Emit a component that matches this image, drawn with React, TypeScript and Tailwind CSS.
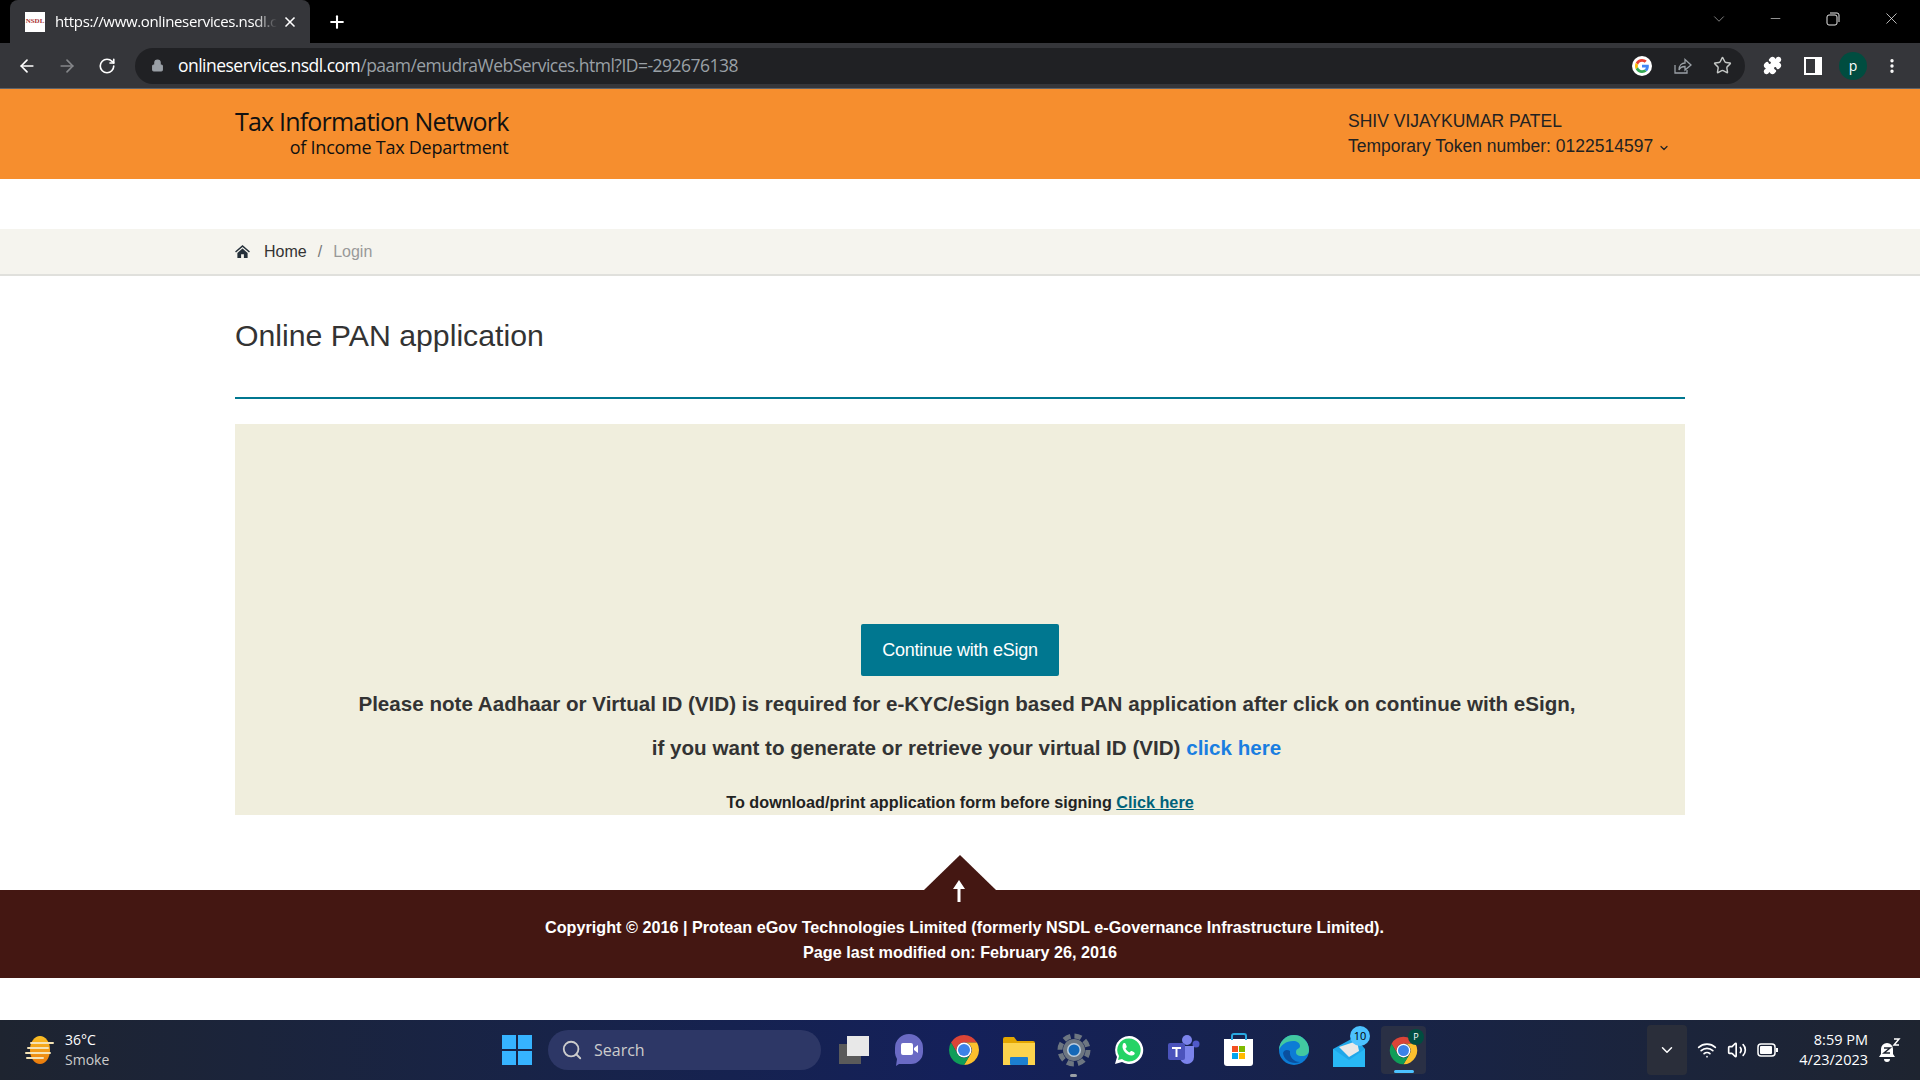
import { ArrowLeft, ArrowRight, ChevronDown, Lock, MoreVertical, Plus, RotateCw, Search, Star, Volume2, Wifi, X, Puzzle, Minus } from "lucide-react";

function ChromeLogo({ size = 40 }: { size?: number }) {
  return (
    <svg width={size} height={size} viewBox="0 0 48 48">
      <path d="M6.68 14A20 20 0 0 1 41.32 14L24 14A10 10 0 0 0 15.34 29Z" fill="#db4437" />
      <path d="M41.32 14A20 20 0 0 1 24 44L33 29A10 10 0 0 0 24 14Z" fill="#fbc02d" />
      <path d="M24 44A20 20 0 0 1 6.68 14L15.34 29A10 10 0 0 0 33 29Z" fill="#0f9d58" />
      <circle cx="24" cy="24" r="10" fill="#fff" />
      <circle cx="24" cy="24" r="8" fill="#3b82e8" />
    </svg>
  );
}

function TabStrip() {
  return (
    <div className="flex h-[43px] items-end bg-black pl-[10px] text-white">
      <div className="flex h-[43px] w-[300px] items-center rounded-t-lg bg-[#35363a] pl-[15px] pr-[12px]">
        <div className="flex h-[20px] w-[20px] shrink-0 items-center justify-center bg-white font-['Liberation_Serif',serif] text-[7px] font-bold text-[#a33]">
          NSDL
        </div>
        <span className="mb-[1px] ml-[10px] whitespace-nowrap font-['Open_Sans',sans-serif] text-[15px] tracking-[-0.35px] [mask-image:linear-gradient(to_right,black_90%,transparent)]">
          https://www.onlineservices.nsdl.c
        </span>
        <X size={16} strokeWidth={2.5} className="ml-auto shrink-0" />
      </div>
      <Plus size={20} strokeWidth={2.5} className="mb-[11px] ml-[17px]" />
      <div className="mb-[15px] ml-auto flex items-center text-[#e8e8e8]">
        <ChevronDown size={18} strokeWidth={1} className="mr-[40px] text-[#aaa]" />
        <Minus size={15} strokeWidth={1} className="mr-[43px]" />
        <svg width="14" height="14" viewBox="0 0 14 14" fill="none" stroke="currentColor" className="mr-[42px]">
          <rect x="1" y="3" width="10" height="10" rx="2" />
          <path d="M4 1h7a2 2 0 0 1 2 2v7" />
        </svg>
        <X size={19} strokeWidth={1} className="mr-[19px]" />
      </div>
    </div>
  );
}

function Toolbar() {
  return (
    <div className="flex h-[46px] items-center border-b border-[#5f6368] bg-[#35363a] text-white">
      <ArrowLeft size={20} strokeWidth={2} className="ml-[17px]" />
      <ArrowRight size={20} strokeWidth={2} className="ml-[20px] text-[#85878a]" />
      <RotateCw size={18} strokeWidth={2.2} className="ml-[21px]" />
      <div className="ml-[19px] flex h-[36px] w-[1610px] items-center rounded-full bg-[#202124] pl-[16px]">
        <Lock size={13} fill="#9aa0a6" className="text-[#9aa0a6]" />
        <span className="ml-[14px] font-['Open_Sans',sans-serif] text-[17.5px] tracking-[-0.52px]">
          onlineservices.nsdl.com<span className="text-[#9aa0a6]">/paam/emudraWebServices.html?ID=-292676138</span>
        </span>
        <div className="ml-auto flex items-center">
          <div className="flex h-[20px] w-[20px] items-center justify-center rounded-full bg-white">
            <svg width="14" height="14" viewBox="0 0 48 48">
              <path fill="#ea4335" d="M24 9.5c3.5 0 6.700 1.300 9.200 3.500l6.900-6.900C35.900 2.400 30.300 0 24 0 14.600 0 6.500 5.400 2.600 13.200l8 6.200C12.500 13.600 17.800 9.500 24 9.500z" />
              <path fill="#4285f4" d="M47.500 24.500c0-1.600-.1-3.100-.4-4.500H24v9h13.200c-.6 3-2.300 5.500-4.800 7.200l7.700 6c4.500-4.200 7.400-10.300 7.400-17.700z" />
              <path fill="#fbbc05" d="M10.500 28.600c-.5-1.400-.8-3-.8-4.600s.3-3.200.8-4.600l-8-6.200C.9 16.500 0 20.100 0 24s.9 7.500 2.600 10.800l7.900-6.200z" />
              <path fill="#34a853" d="M24 48c6.500 0 11.900-2.100 15.900-5.800l-7.700-6c-2.200 1.400-4.900 2.300-8.200 2.300-6.200 0-11.500-4.200-13.400-9.800l-8 6.200C6.500 42.600 14.600 48 24 48z" />
            </svg>
          </div>
          <svg width="20" height="20" viewBox="0 0 20 20" fill="none" stroke="#9aa0a6" strokeWidth="1.300" className="ml-[20px]">
            <path d="M3 9v8h12v-3M7 14c0-5 3-7 6-7V3.500l6 5.500-6 5v-3.500c-3 0-5 1-6 3.500z" />
          </svg>
          <Star size={19} strokeWidth={1.8} className="ml-[21px] mr-[13px] text-[#c4c7c5]" />
        </div>
      </div>
      <Puzzle size={19} fill="#fff" className="ml-[18px]" />
      <div className="ml-[22px] flex h-[18px] w-[18px] justify-start border-[2.5px] border-white bg-white">
        <div className="h-full w-[9px] bg-[#35363a]" />
      </div>
      <div className="ml-[17px] flex h-[28px] w-[28px] items-center justify-center rounded-full bg-[#004d40] font-['Open_Sans',sans-serif] text-[14px] text-white">
        p
      </div>
      <MoreVertical size={18} strokeWidth={2.5} className="ml-[16px]" />
    </div>
  );
}

function SiteHeader() {
  return (
    <div className="flex h-[90px] items-center justify-between bg-[#f68e2e] px-[235px]">
      <div className="mb-[4px] flex flex-col items-end font-['Open_Sans',sans-serif] leading-none text-[#111]">
        <div className="text-[25px] tracking-[-0.8px]">Tax Information Network</div>
        <div className="mt-[4px] text-[18px] tracking-[-0.25px]">of Income Tax Department</div>
      </div>
      <div className="w-[337px] font-['Liberation_Sans',sans-serif] text-[17.5px] leading-[25px] text-[#222]">
        <div>SHIV VIJAYKUMAR PATEL</div>
        <div className="flex items-center">
          Temporary Token number: 0122514597
          <ChevronDown size={12} strokeWidth={2.5} className="ml-[5px] mt-[3px]" />
        </div>
      </div>
    </div>
  );
}

function Breadcrumb() {
  return (
    <div className="mt-[50px] flex h-[47px] items-center border-b-2 border-[#e0e0dc] bg-[#f5f4ee] px-[235px] font-['Liberation_Sans',sans-serif] text-[16px]">
      <svg width="15" height="13" viewBox="0 0 16 14" fill="#25303a">
        <path d="M8 0 0 7l1 1.200L8 2.200l7 6L16 7zM2.500 8.500V14H6.500V10h3v4h4V8.500L8 3.700z" />
      </svg>
      <span className="ml-[14px] text-[#333]">Home</span>
      <span className="ml-[11px] text-[#777]">/</span>
      <span className="ml-[11px] text-[#999]">Login</span>
    </div>
  );
}

function MainContent() {
  return (
    <div className="px-[235px] font-['Liberation_Sans',sans-serif] text-[#333]">
      <h1 className="mt-[42px] text-[30.25px] leading-[36px]">Online PAN application</h1>
      <div className="mt-[43px] h-[2px] bg-[#007790]" />
      <div className="mt-[25px] flex h-[391px] flex-col items-center bg-[#f0eedd] pt-[200px]">
        <button className="h-[52px] w-[198px] rounded-[2px] bg-[#007790] text-[18px] tracking-[-0.25px] text-white">
          Continue with eSign
        </button>
        <p className="mt-[14px] pl-[14px] text-[20.6px] font-bold leading-[28px]">
          Please note Aadhaar or Virtual ID (VID) is required for e-KYC/eSign based PAN application after click on continue with eSign,
        </p>
        <p className="mt-[16px] pl-[13px] text-[20.6px] font-bold leading-[28px]">
          if you want to generate or retrieve your virtual ID (VID) <a className="text-[#1a7ee0]">click here</a>
        </p>
        <p className="mt-[29px] text-[16.2px] font-bold leading-[22px] text-[#222]">
          To download/print application form before signing <a className="text-[#00627a] underline">Click here</a>
        </p>
      </div>
    </div>
  );
}

function Footer() {
  return (
    <div className="relative mt-[75px] h-[88px] bg-[#441712] pt-[25px] text-center font-['Liberation_Sans',sans-serif] text-[16.2px] font-bold leading-[25px] text-white">
      {/* back to top notch */}
      <div className="absolute bottom-full left-1/2 h-0 w-0 -translate-x-1/2 border-x-[36px] border-b-[35px] border-x-transparent border-b-[#441712]" />
      <svg width="14" height="22" viewBox="0 0 14 22" className="absolute left-1/2 top-[-10px] ml-[-8px]">
        <path d="M7 0 13 9H8.500V22H5.500V9H1Z" fill="#fff" />
      </svg>
      <div className="pl-[9px]">Copyright © 2016 | Protean eGov Technologies Limited (formerly NSDL e-Governance Infrastructure Limited).</div>
      <div>Page last modified on: February 26, 2016</div>
    </div>
  );
}

function TaskIcon({ children, active }: { children: React.ReactNode; active?: boolean }) {
  return (
    <div className={`relative flex h-[48px] w-[45px] items-center justify-center rounded ${active ? "bg-[#2a3045]" : ""}`}>
      {children}
      {active && <div className="absolute bottom-[1px] h-[3px] w-[20px] rounded-full bg-[#4cc2ff]" />}
    </div>
  );
}

function Taskbar() {
  return (
    <div className="mt-auto grid h-[60px] grid-cols-[1fr_auto_1fr] items-center bg-gradient-to-r from-[#1e2430] via-[#14205a] to-[#1e2430] font-['Open_Sans',sans-serif] text-white">
      <div className="flex items-center pl-[25px]">
        <svg width="30" height="30" viewBox="0 0 30 30">
          <defs>
            <linearGradient id="sun" x1="0" y1="0" x2="0" y2="1">
              <stop offset="0" stopColor="#fbbf24" />
              <stop offset="1" stopColor="#ea7a0c" />
            </linearGradient>
          </defs>
          <ellipse cx="15" cy="15" rx="10" ry="14" fill="url(#sun)" />
          <path d="M6 8h22M3 13h20M1 18h24M2 23h16" stroke="#f5e3b5" strokeWidth="2" strokeLinecap="round" />
        </svg>
        <div className="ml-[10px] text-[14px] leading-[20px]">
          <div>36°C</div>
          <div className="text-[#ccc]">Smoke</div>
        </div>
      </div>
      <div className="flex items-center gap-[10px] pl-[8px]">
        <svg width="30" height="30" viewBox="0 0 30 30" className="mr-[2px]">
          <path d="M0 0H14V14H0ZM16 0H30V14H16ZM0 16H14V30H0ZM16 16H30V30H16Z" fill="#36b3ff" />
        </svg>
        <div className="ml-[4px] flex h-[40px] w-[273px] items-center rounded-full bg-[#2d3766] pl-[13px] text-[16px] text-[#ccc]">
          <Search size={22} />
          <span className="ml-[11px]">Search</span>
        </div>
        <TaskIcon>
          <div className="relative h-[28px] w-[30px]">
            <div className="absolute bottom-0 left-0 h-[20px] w-[22px] bg-[#5a5a5a]" />
            <div className="absolute right-0 top-0 h-[20px] w-[22px] bg-[#e8e8e8]" />
          </div>
        </TaskIcon>
        <TaskIcon>
          <svg width="30" height="34" viewBox="0 0 30 34">
            <path d="M15 1a14 14 0 0 1 14 14v4a12 12 0 0 1-12 12H5l-3 2 1-7a14 14 0 0 1-2-6v-5A14 14 0 0 1 15 1z" fill="#6a6ac4" />
            <path d="M7 12a2 2 0 0 1 2-2h8a2 2 0 0 1 2 2v8a2 2 0 0 1-2 2H9a2 2 0 0 1-2-2zM20 15l4-3v8l-4-3z" fill="#fff" />
          </svg>
        </TaskIcon>
        <TaskIcon>
          <ChromeLogo size={36} />
        </TaskIcon>
        <TaskIcon>
          <svg width="32" height="30" viewBox="0 0 32 30">
            <path d="M0 4a2 2 0 0 1 2-2h9l3 4h16a2 2 0 0 1 2 2v22H0z" fill="#e3a600" />
            <path d="M0 8h32v22H0z" fill="#fcd34d" />
            <rect x="7" y="22" width="18" height="8" rx="1" fill="#1c7fd0" />
          </svg>
        </TaskIcon>
        <TaskIcon>
          <svg width="34" height="34" viewBox="0 0 34 34">
            <circle cx="17" cy="17" r="14" fill="none" stroke="#6d7681" strokeWidth="5" strokeDasharray="7 4" />
            <circle cx="17" cy="17" r="11" fill="#6d7681" />
            <circle cx="17" cy="17" r="7" fill="#bcd" />
            <circle cx="17" cy="17" r="5.500" fill="#1468b8" />
          </svg>
          <div className="absolute bottom-[-3px] h-[3px] w-[7px] rounded-full bg-[#9aa0a6]" />
        </TaskIcon>
        <TaskIcon>
          <svg width="32" height="32" viewBox="0 0 32 32">
            <path d="M16 2a14 14 0 0 0-12 21L2 30l7-2A14 14 0 1 0 16 2z" fill="#fff" />
            <path d="M16 4.500A11.500 11.500 0 0 0 6 22l-1 4 4-1a11.500 11.500 0 1 0 7-20.500z" fill="#25d366" />
            <path d="M11 9c1 0 1.500 0 2 1.500s1 2 .5 3l-1 1c.8 1.700 2.300 3.200 4 4l1.200-1.200c.6-.5 1-.4 3 .7s1 3-1.700 3.500C14 22 9 16 9.500 12c.2-2 .8-3 1.500-3z" fill="#fff" />
          </svg>
        </TaskIcon>
        <TaskIcon>
          <svg width="32" height="30" viewBox="0 0 32 30">
            <circle cx="19" cy="5" r="5" fill="#7b83eb" />
            <circle cx="28" cy="9" r="3.500" fill="#5059c9" />
            <path d="M12 11h14v11a7 7 0 0 1-14 0z" fill="#7b83eb" />
            <rect x="0" y="8" width="17" height="17" rx="2" fill="#4b53bc" />
            <path d="M4 12h9v2H9.500v8h-2v-8H4z" fill="#fff" />
          </svg>
        </TaskIcon>
        <TaskIcon>
          <div className="relative mt-[4px] flex h-[27px] w-[29px] items-center justify-center rounded-b-[3px] bg-white">
            <div className="absolute -top-[6px] h-[7px] w-[16px] rounded-t-[3px] border-2 border-b-0 border-[#29a8e0]" />
            <div className="grid grid-cols-2 gap-[1px]">
              <div className="h-[6px] w-[6px] bg-[#f25022]" />
              <div className="h-[6px] w-[6px] bg-[#7fba00]" />
              <div className="h-[6px] w-[6px] bg-[#00a4ef]" />
              <div className="h-[6px] w-[6px] bg-[#ffb900]" />
            </div>
          </div>
        </TaskIcon>
        <TaskIcon>
          <svg width="32" height="32" viewBox="0 0 32 32">
            <circle cx="16" cy="16" r="15" fill="#0c7cd5" />
            <path d="M1 16A15 15 0 0 1 31 16c0 4-3 6-7 6-5 0-6-2-6-4 0-4 4-3 4-6 0-3-3-5-7-5C8 7 3 11 1 16z" fill="#42c8a0" />
            <path d="M12 17c-1 6 4 11 10 11-7 3-16-1-17-9 1-3 4-4 7-2z" fill="#0a4f9e" />
          </svg>
        </TaskIcon>
        <TaskIcon>
          <svg width="32" height="30" viewBox="0 0 32 30" className="mt-[4px]">
            <path d="M0 12 22 0l10 12v18H0z" fill="#1ea7e9" />
            <path d="M6 10 24 4l2 10-10 6z" fill="#e8e8e8" />
            <path d="M0 12l16 11 16-11v18H0z" fill="#28b8f5" />
          </svg>
          <div className="absolute right-[1px] top-0 flex h-[20px] w-[20px] items-center justify-center rounded-full bg-[#4cc2ff] text-[11px] text-black">
            10
          </div>
        </TaskIcon>
        <TaskIcon active>
          <ChromeLogo size={33} />
          <div className="absolute right-[2px] top-[3px] flex h-[16px] w-[16px] items-center justify-center rounded-full bg-[#004d40] text-[9px] text-white">
            P
          </div>
        </TaskIcon>
      </div>
      <div className="flex items-center justify-end pr-[19px]">
        <div className="mr-[10px] flex h-[50px] w-[40px] items-center justify-center rounded bg-[#2a2e3a]">
          <ChevronDown size={18} />
        </div>
        <Wifi size={20} />
        <Volume2 size={20} className="ml-[10px]" />
        <svg width="22" height="14" viewBox="0 0 22 14" fill="none" stroke="#fff" strokeWidth="1.500" className="ml-[10px]">
          <rect x="1" y="1" width="17" height="12" rx="3" />
          <rect x="3" y="3" width="12" height="8" rx="1" fill="#fff" stroke="none" />
          <path d="M20 5v4" strokeWidth="2" />
        </svg>
        <div className="ml-[20px] text-right text-[14.5px] leading-[20px]">
          <div>8:59 PM</div>
          <div>4/23/2023</div>
        </div>
        <svg width="22" height="24" viewBox="0 0 22 24" fill="#fff" className="ml-[11px]">
          <path d="M8 5a6 6 0 0 0-6 6v5l-2 3h16l-2-3v-5a6 6 0 0 0-6-6zM5 21h6a3 3 0 0 1-6 0z" />
          <path d="M5 10h6l-6 5h6" fill="none" stroke="#1e2430" strokeWidth="1.500" />
          <path d="M15 1h5l-5 6h5" fill="none" stroke="#fff" strokeWidth="1.500" />
        </svg>
      </div>
    </div>
  );
}

export default function App() {
  return (
    <div className="flex h-screen flex-col overflow-hidden bg-white">
      <TabStrip />
      <Toolbar />
      <SiteHeader />
      <Breadcrumb />
      <MainContent />
      <Footer />
      <Taskbar />
    </div>
  );
}
